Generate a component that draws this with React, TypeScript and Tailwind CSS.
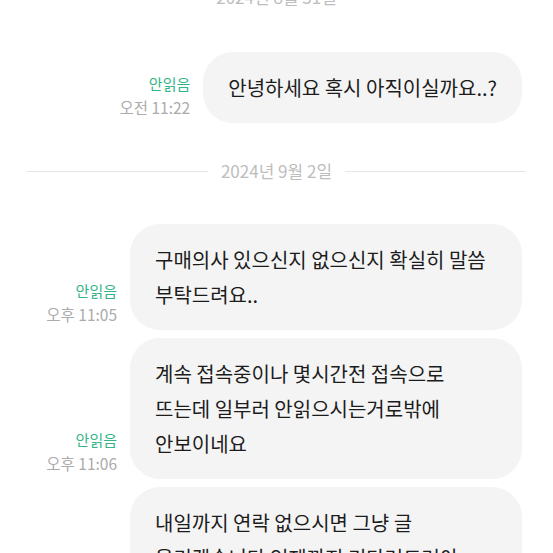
import React from "react";

type Message = {
  text: string;
  time: string;
};

const DateDivider: React.FC<{ label: string; className?: string }> = ({ label, className }) => (
  <div className={`flex items-center gap-[13px] ${className ?? ""}`}>
    <div className="h-px flex-1 bg-[#e6e6e6]" />
    <span className="text-[17px] leading-[20px] text-[#bdbdbd]">{label}</span>
    <div className="h-px flex-1 bg-[#e6e6e6]" />
  </div>
);

const SentMessage: React.FC<{ message: Message }> = ({ message }) => (
  <div className="flex items-end justify-end gap-[13px] pr-[4px]">
    <div className="flex flex-col items-end pb-[5px]">
      <span className="text-[15px] leading-[25px] text-[#35b587]">안읽음</span>
      <span className="text-[15.5px] leading-[22px] text-[#ababab]">{message.time}</span>
    </div>
    <div className="max-w-[392px] break-keep rounded-[30px] bg-[#f4f4f4] px-[25px] py-[18px] text-[20px] leading-[35px] text-[#1c1c1c]">
      {message.text}
    </div>
  </div>
);

export default function App() {
  const firstDay: Message[] = [{ text: "안녕하세요 혹시 아직이실까요..?", time: "오전 11:22" }];
  const secondDay: Message[] = [
    { text: "구매의사 있으신지 없으신지 확실히 말씀 부탁드려요..", time: "오후 11:05" },
    { text: "계속 접속중이나 몇시간전 접속으로 뜨는데 일부러 안읽으시는거로밖에 안보이네요", time: "오후 11:06" },
    { text: "내일까지 연락 없으시면 그냥 글 올리겠습니다 언제까지 기다려드려야 하나요..", time: "오후 11:08" },
  ];

  return (
    <div
      className="h-[553px] overflow-hidden bg-white px-[27px]"
      style={{ fontFamily: '"Noto Sans CJK KR", "Noto Sans", sans-serif' }}
    >
      <DateDivider label="2024년 8월 31일" className="mt-[-13px]" />
      <div className="mt-[45px] flex flex-col gap-[8px]">
        {firstDay.map((m) => (
          <SentMessage key={m.time} message={m} />
        ))}
      </div>
      <DateDivider label="2024년 9월 2일" className="mt-[38px]" />
      <div className="mt-[43px] flex flex-col gap-[8px]">
        {secondDay.map((m) => (
          <SentMessage key={m.time} message={m} />
        ))}
      </div>
    </div>
  );
}
